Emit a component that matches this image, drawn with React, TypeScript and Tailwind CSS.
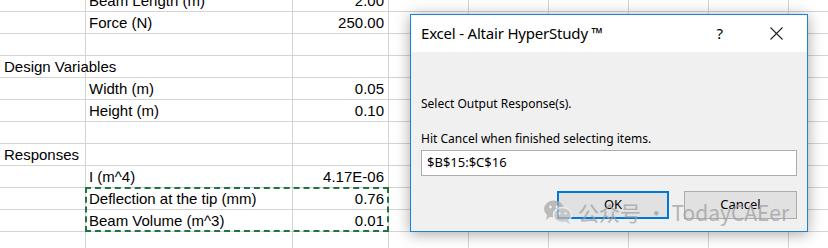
import { FC } from 'react';

const rows: [string, string, string][] = [
    ["", "Beam Length (m)", "2.00"],
    ["", "Force (N)", "250.00"],
    ["", "", ""],
    ["Design Variables", "", ""],
    ["", "Width (m)", "0.05"],
    ["", "Height (m)", "0.10"],
    ["", "", ""],
    ["Responses", "", ""],
    ["", "I (m^4)", "4.17E-06"],
    ["", "Deflection at the tip (mm)", "0.76"],
    ["", "Beam Volume (m^3)", "0.01"],
    ["", "", ""],
]

const Sheet: FC = () => {
    return (
        <div className="-mt-[10px] font-['Liberation_Sans',Arial,sans-serif] text-[15px] text-black">
            {rows.map((r, i) => (
                <div key={i} className="flex h-[22px]">
                    <div className="w-[86px] shrink-0 border-r border-b border-[#d4d4d4] pl-[4px] leading-[21px] whitespace-nowrap overflow-visible">{r[0]}</div>
                    <div className="w-[207px] shrink-0 border-r border-b border-[#d4d4d4] pl-[3px] leading-[21px] whitespace-nowrap">{r[1]}</div>
                    <div className="w-[96px] shrink-0 border-r border-b border-[#d4d4d4] pr-[4px] text-right leading-[21px]">{r[2]}</div>
                    {[0, 1, 2, 3, 4, 5].map((c) => (
                        <div key={c} className="w-[80px] shrink-0 border-r border-b border-[#d4d4d4]"></div>
                    ))}
                </div>
            ))}
        </div>
    )
}

const WeChat: FC = () => (
    <svg width="30" height="26" viewBox="0 0 30 26">
        <ellipse cx="11" cy="10" rx="10" ry="8.5" fill="#a9a9a9" />
        <path d="M4 16 L3 21 L8 17 Z" fill="#a9a9a9" />
        <ellipse cx="19.5" cy="16" rx="9" ry="7.5" fill="#bdbdbd" stroke="#f0f0f0" strokeWidth="1.5" />
        <path d="M25 21 L27 25 L22 22 Z" fill="#bdbdbd" />
        <circle cx="7.5" cy="8" r="1.4" fill="#f0f0f0" />
        <circle cx="14" cy="8" r="1.4" fill="#f0f0f0" />
        <circle cx="16.5" cy="14.5" r="1.2" fill="#f0f0f0" />
        <circle cx="22.5" cy="14.5" r="1.2" fill="#f0f0f0" />
    </svg>
)

export default function App() {
    return (
        <div className="relative w-[828px] h-[248px] overflow-hidden bg-white">
            <Sheet />

            {/* copy marquee */}
            <div className="absolute left-[85px] top-[187px] w-[304px] h-[45px] border-2 border-dashed border-[#217346]"></div>

            {/* dialog */}
            <div className="absolute left-[410px] top-[14px] w-[398px] h-[218px] flex flex-col border border-[#1883d7] bg-[#f0f0f0] shadow-[0_2px_14px_rgba(0,0,0,0.35)] font-['Noto_Sans','Open_Sans',sans-serif] text-black">
                <div className="h-[37px] bg-white flex items-center pl-[10px]">
                    <span className="text-[15px] tracking-[-0.2px]">Excel - Altair HyperStudy ™</span>
                    <span className="ml-auto mr-[47px] text-[15px]">?</span>
                    <svg className="mr-[24px]" width="13" height="13" viewBox="0 0 13 13">
                        <path d="M0.5 0.5 L12.5 12.5 M12.5 0.5 L0.5 12.5" stroke="#222" strokeWidth="1.1" />
                    </svg>
                </div>
                <div className="flex flex-col px-[10px] text-[12px]">
                    <div className="mt-[44px] leading-[16px]">Select Output Response(s).</div>
                    <div className="mt-[19px] leading-[16px]">Hit Cancel when finished selecting items.</div>
                    <div className="mt-[3px] h-[26px] bg-white border border-[#adadad] flex items-center pl-[5px] text-[13px]">$B$15:$C$16</div>
                    <div className="mt-[15px] flex justify-end gap-[15px]">
                        <button className="w-[112px] h-[28px] border-2 border-[#0078d7] bg-[#e1e1e1] text-[13px]">OK</button>
                        <button className="w-[113px] h-[28px] border border-[#adadad] bg-[#e1e1e1] text-[13px]">Cancel</button>
                    </div>
                </div>
            </div>

            {/* watermark */}
            <div className="absolute left-[543px] top-[199px] flex items-center gap-[5px] opacity-75 pointer-events-none whitespace-nowrap">
                <WeChat />
                <span className="text-[21px] leading-[26px] text-[#a0a0a0] font-['Noto_Sans_CJK_SC','Noto_Sans',sans-serif]">公众号 · TodayCAEer</span>
            </div>
        </div>
    );
}
